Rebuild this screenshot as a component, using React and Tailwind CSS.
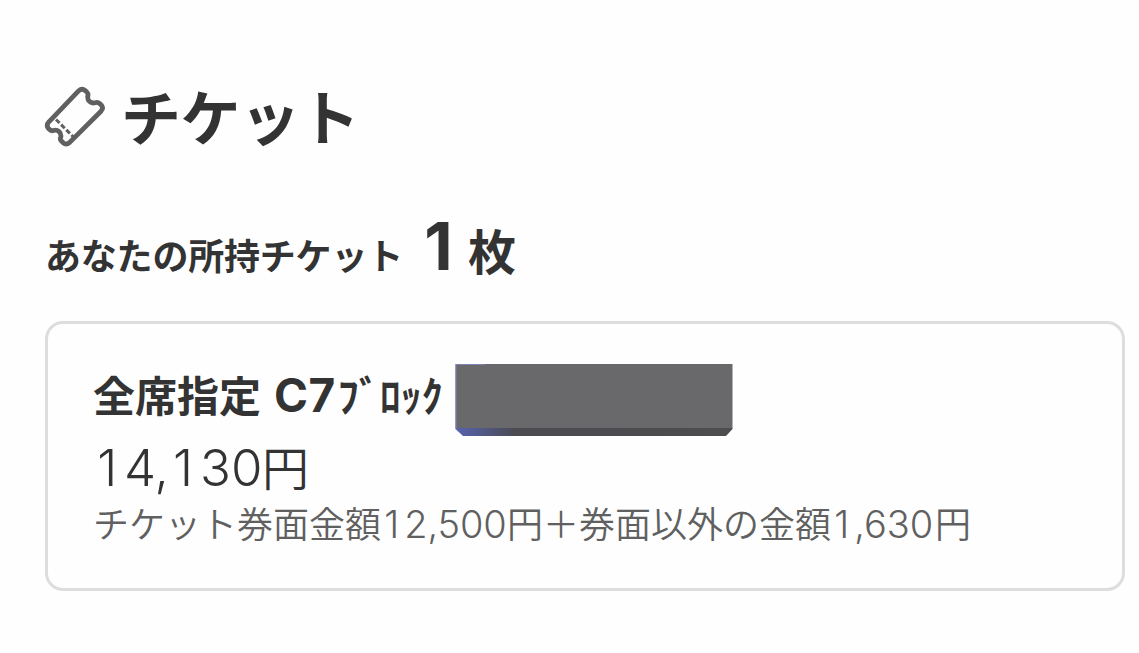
import React from "react";

const TicketIcon = () => {
  return (
    <svg
      className="w-[64px] h-[64px] shrink-0 -ml-px"
      viewBox="0 0 64 64"
      fill="none"
      stroke="#606060"
      strokeWidth="4.8"
      strokeLinejoin="round"
    >
      <path d="M34.8 5.7Q38 2.8 41.2 5.6L42.8 7.1Q44.5 8.8 43.8 10.9C43 15.7 46.8 18.9 51.2 17.7Q53.8 16.8 55.6 18.5L57.2 20Q60 22.8 57 26.2L25.7 57.4Q22.2 60.5 19.2 57.7L17.2 55.7Q15.7 54.2 16.8 52C17.6 47.7 13.6 43.9 9.5 45.5Q7 46.3 5.1 44.2L4.3 43.2Q2 40.2 4.7 37.2Z" />
      <path d="M12 34.5L29 51.5" strokeWidth="3" strokeDasharray="5 2.3" />
    </svg>
  );
};

const Num = ({ className, children }) => {
  return (
    <span className={`font-['Inter','Noto_Sans_CJK_JP',sans-serif] ${className}`}>
      {children.split("").map((char, index) =>
        char === "1" ? (
          // every digit takes the same width, the one included
          <span key={index} className="inline-block w-[0.61em] pr-[0.05em] text-center">
            1
          </span>
        ) : (
          <span key={index}>{char}</span>
        )
      )}
    </span>
  );
};

const App = () => {
  return (
    <main
      lang="ja"
      className="w-[1139px] h-[653px] overflow-hidden bg-[#fefefe] pl-[45px] pr-[14px] pt-[82px] text-[#333333] font-['Noto_Sans_CJK_JP',sans-serif] whitespace-nowrap"
    >
      <h1 className="flex items-center h-[70px] text-[60px] leading-[66px] font-bold">
        <TicketIcon />
        <span className="ml-[13px] h-[70px] tracking-[-0.4px]">チケット</span>
      </h1>

      <div className="flex items-baseline h-[90px] mt-[49px] mb-[30px] leading-[90px] font-bold">
        <span className="w-[360px] text-[36px] tracking-[-0.2px]">あなたの所持チケット</span>
        <Num className="ml-[15px] w-[48px] text-[66px]">1</Num>
        <span className="text-[48px]">枚</span>
      </div>

      <section className="h-[270px] rounded-[18px] border-[3px] border-[#dddddd] pl-[45px] pt-[39px]">
        <div className="flex h-[74px]">
          <div className="flex items-baseline w-[362px] h-[62px] text-[42px] leading-[62px] font-bold">
            <span>全席指定</span>
            <Num className="ml-[13px] text-[46px] tracking-[0.5px]">C7</Num>
            <span className="ml-[2px]">ﾌﾞﾛｯｸ</span>
          </div>
          <svg className="w-[278px] h-[74px]" viewBox="0 0 278 74">
            <defs>
              <linearGradient id="edge">
                <stop offset="0" stopColor="#5663b0" />
                <stop offset="0.22" stopColor="#4b4b50" />
                <stop offset="1" stopColor="#4d4d4f" />
              </linearGradient>
            </defs>
            <path d="M0.5 65H277.5V66L271 73H8L0.5 66Z" fill="url(#edge)" />
            <path d="M0.5 1H277.5V65H0.5Z" fill="#69696b" />
            <path d="M1 66V1.5H30" fill="none" stroke="#7b82b4" />
          </svg>
        </div>
        <p className="flex items-baseline h-[60px] text-[47px] leading-[58px] font-[350]">
          <Num className="w-[169px] text-[51px]">14,130</Num>円
        </p>
        <p className="flex items-baseline h-[54px] text-[36px] leading-[50px] font-[350] text-[#606060]">
          チケット券面金額
          <Num className="w-[126px] text-[38px] tracking-[-0.1px]">12,500</Num>
          円＋券面以外の金額
          <Num className="w-[104px] text-[38px]">1,630</Num>円
        </p>
      </section>
    </main>
  );
};

export default App;
